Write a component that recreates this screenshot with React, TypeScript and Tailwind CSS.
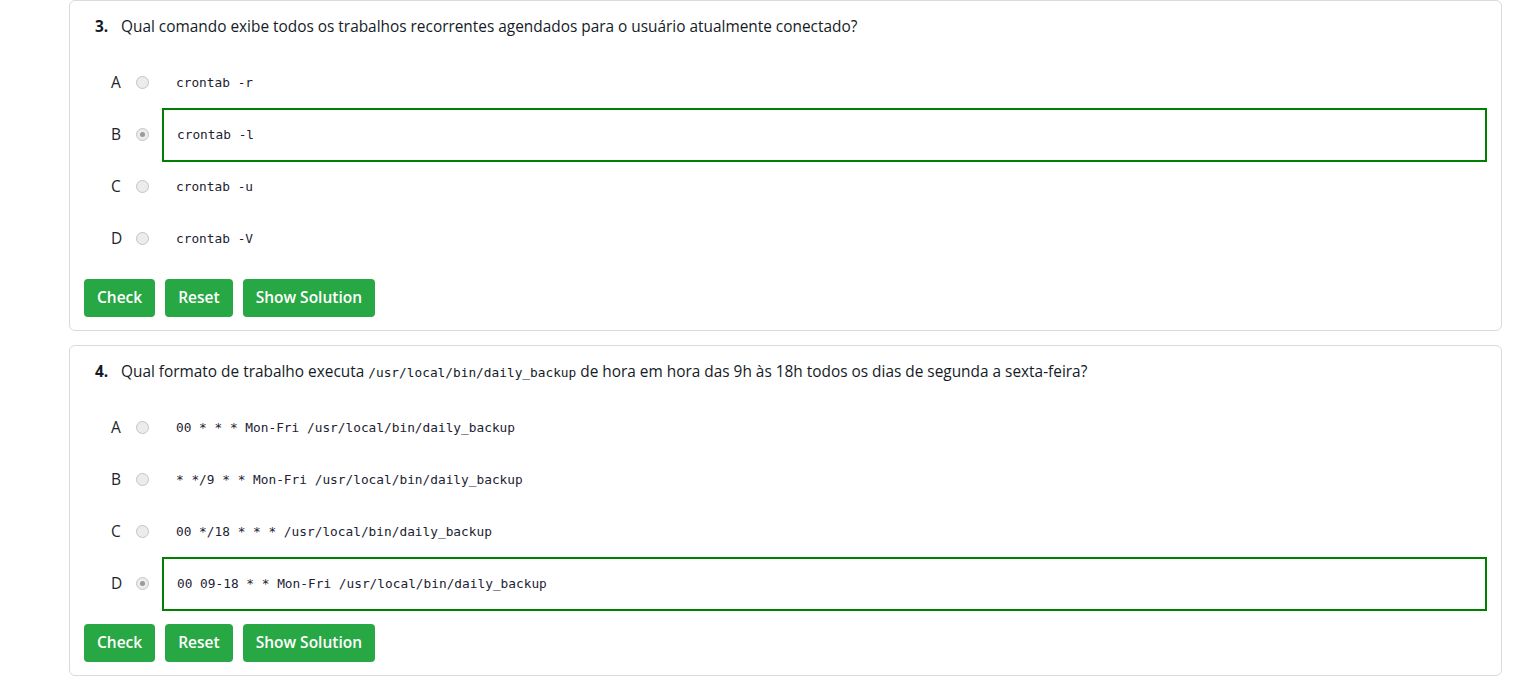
import React from "react";

type Opt = { letter: string; code: React.ReactNode; selected?: boolean };

const mono = "font-['DejaVu_Sans_Mono',monospace]";

function Radio({ checked }: { checked?: boolean }) {
  return (
    <span className="flex h-[13px] w-[13px] items-center justify-center rounded-full border border-[#c4c4c4] bg-[#ececec]">
      {checked ? <span className="h-[5px] w-[5px] rounded-full bg-[#9a9a9a]" /> : null}
    </span>
  );
}

function Option({ o }: { o: Opt }) {
  return (
    <div className="flex h-[52px] items-center pl-[27px]">
      <span className="w-[14px] text-[15.5px] leading-none text-[#212529]">{o.letter}</span>
      <span className="ml-[11px] -mt-[2px]">
        <Radio checked={o.selected} />
      </span>
      <div
        className={`ml-[13px] flex h-[54px] flex-1 items-center border-2 ${
          o.selected ? "border-[#008000] pl-[13px]" : "border-transparent pl-[12px]"
        }`}
      >
        <span className={`${mono} text-[12.8px] text-[#1c2333] whitespace-pre`}>{o.code}</span>
      </div>
    </div>
  );
}

function Btn({ children }: { children: React.ReactNode }) {
  return (
    <button className="h-[38px] rounded-[4px] bg-[#28a745] px-[13px] text-[15.5px] font-semibold text-white">
      {children}
    </button>
  );
}

function Card({ num, question, opts }: { num: string; question: React.ReactNode; opts: Opt[] }) {
  return (
    <div className="rounded-md border border-[#dadada] bg-white px-[14px] pt-[14px] pb-[13px]">
      <div className="flex items-baseline pl-[11px] text-[15.4px] leading-[24px] text-[#151b26]">
        <span className="w-[26px] font-bold">{num}</span>
        <span>{question}</span>
      </div>
      <div className="mt-[18px] flex flex-col">
        {opts.map((o) => (
          <Option key={o.letter} o={o} />
        ))}
      </div>
      <div className="mt-[14px] flex gap-[10px]">
        <Btn>Check</Btn>
        <Btn>Reset</Btn>
        <Btn>Show Solution</Btn>
      </div>
    </div>
  );
}

export default function App() {
  return (
    <div className="min-h-screen bg-white font-['Open_Sans',sans-serif]">
      <div className="ml-[69px] mr-[25px] flex flex-col gap-[14px] pb-[12px]">
        <Card
          num="3."
          question="Qual comando exibe todos os trabalhos recorrentes agendados para o usuário atualmente conectado?"
          opts={[
            { letter: "A", code: "crontab -r" },
            { letter: "B", code: "crontab -l", selected: true },
            { letter: "C", code: "crontab -u" },
            { letter: "D", code: "crontab -V" },
          ]}
        />
        <Card
          num="4."
          question={
            <>
              Qual formato de trabalho executa{" "}
              <code className={`${mono} text-[12.8px] leading-none`}>/usr/local/bin/daily_backup</code> de hora
              em hora das 9h às 18h todos os dias de segunda a sexta-feira?
            </>
          }
          opts={[
            { letter: "A", code: "00 * * * Mon-Fri /usr/local/bin/daily_backup" },
            { letter: "B", code: "* */9 * * Mon-Fri /usr/local/bin/daily_backup" },
            { letter: "C", code: "00 */18 * * * /usr/local/bin/daily_backup" },
            { letter: "D", code: "00 09-18 * * Mon-Fri /usr/local/bin/daily_backup", selected: true },
          ]}
        />
      </div>
    </div>
  );
}
